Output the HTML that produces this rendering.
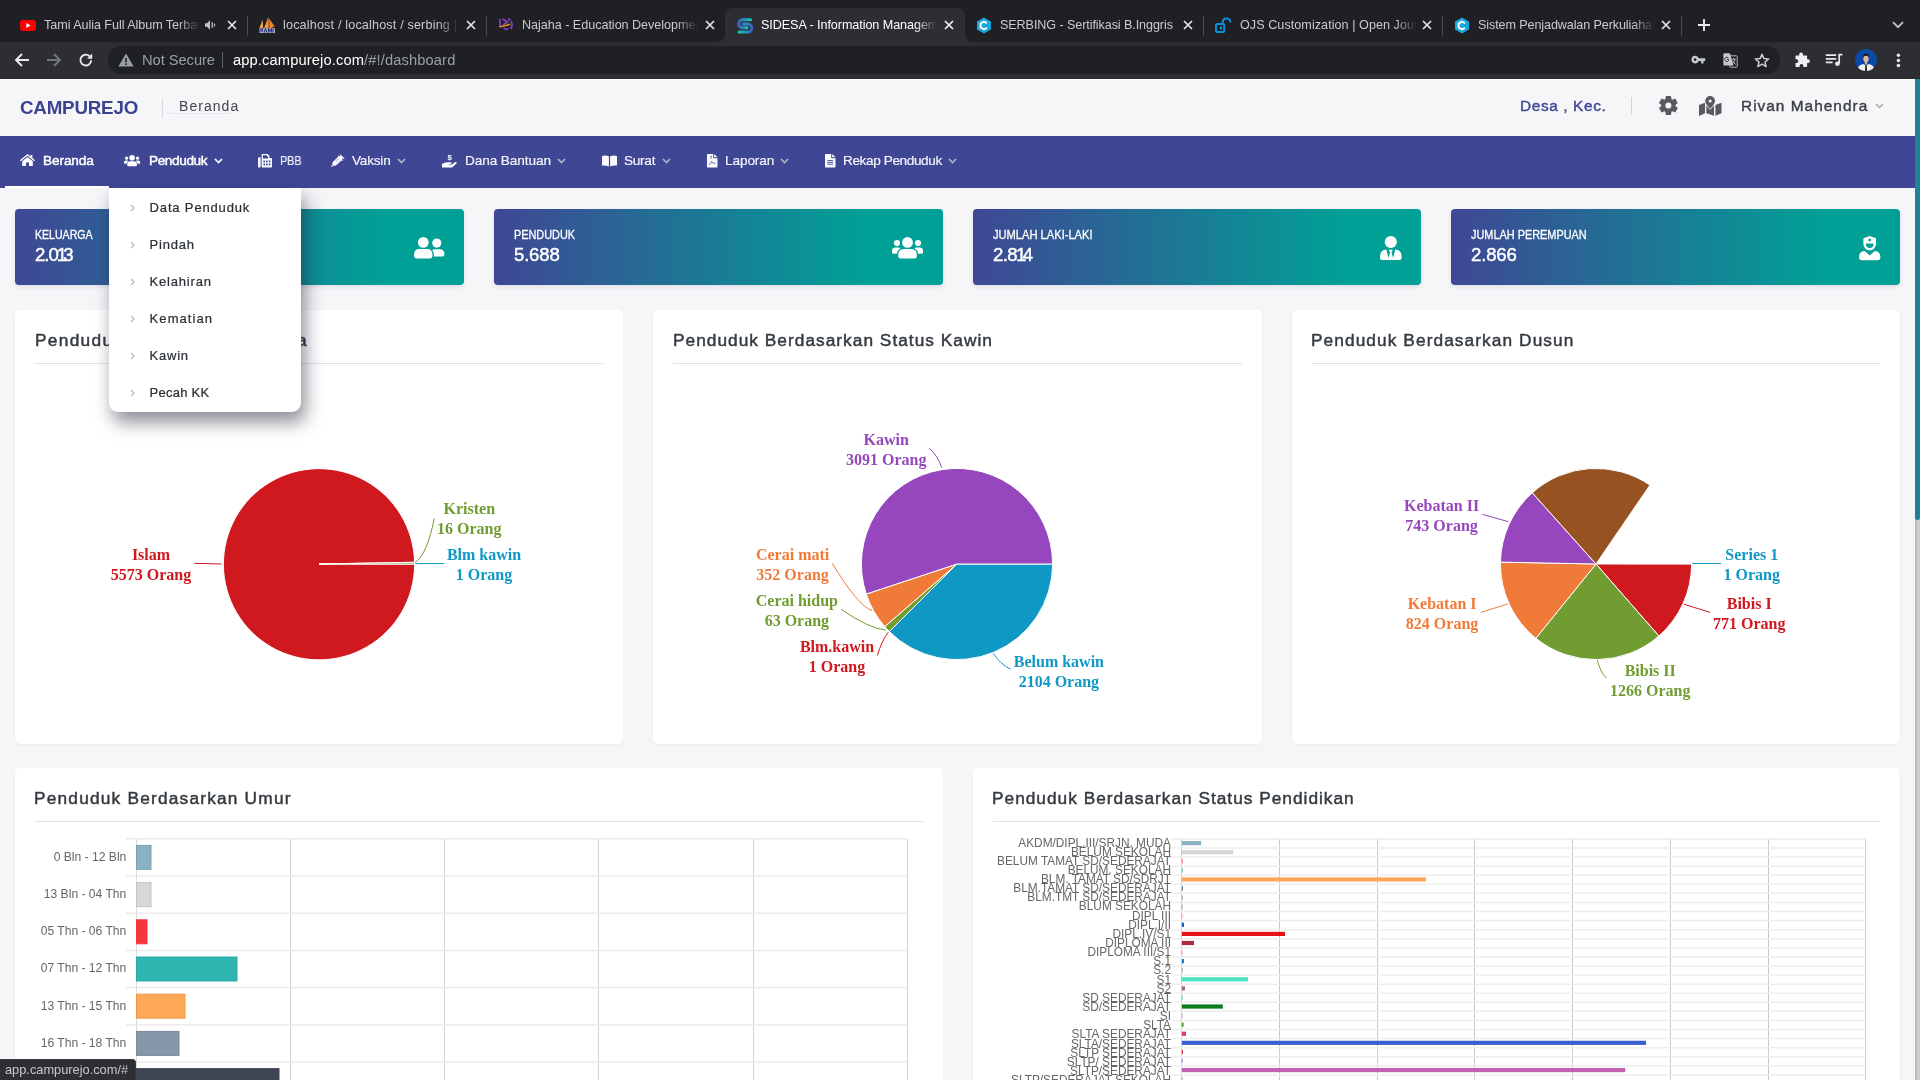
<!DOCTYPE html>
<html lang="id">
<head>
<meta charset="utf-8">
<title>SIDESA - Information Management</title>
<style>
*{box-sizing:border-box;margin:0;padding:0}
html,body{width:1920px;height:1080px;overflow:hidden;background:#f6f6f9;font-family:"Liberation Sans",sans-serif}
.abs{position:absolute}
#root{position:relative;width:1920px;height:1080px;overflow:hidden;background:#f6f6f9}
/* ---------- browser chrome ---------- */
#tabstrip{left:0;top:0;width:1920px;height:42px;background:#1f2023}
#toolbar{left:0;top:42px;width:1920px;height:37px;background:#2d2e32}
#toolbar-line{left:0;top:78px;width:1920px;height:1px;background:#2a2b2e}
#omni{left:108px;top:46px;width:1672px;height:28px;border-radius:14px;background:#1f2023}
.tab-title{top:16px;height:18px;line-height:18px;font-size:12.6px;color:#c9cbcf;white-space:nowrap;overflow:hidden;letter-spacing:0}
.tab-title.fade{-webkit-mask-image:linear-gradient(90deg,#000 0,#000 calc(100% - 22px),transparent 100%);mask-image:linear-gradient(90deg,#000 0,#000 calc(100% - 22px),transparent 100%)}
.tsep{top:16px;width:1px;height:20px;background:#4a4c50}
.tclose{top:19px;width:12px;height:12px}
#acttab{left:725px;top:8px;width:240px;height:34px;background:#2d2e32;border-radius:8px 8px 0 0}
.omni-txt{top:50px;height:20px;line-height:20px;font-size:14.7px;white-space:nowrap;letter-spacing:.12px}
/* ---------- app ---------- */
#apphead{left:0;top:79px;width:1915px;height:57px;background:#f6f6f9;border-top:1px solid #fff}
#nav{left:0;top:136px;width:1915px;height:52px;background:#3f4794}
.nv{top:150.3px;height:22px;line-height:22px;font-size:13.6px;color:rgba(255,255,255,.93);-webkit-text-stroke:.2px rgba(255,255,255,.9);white-space:nowrap}
.nv.on{color:#fff;-webkit-text-stroke:.45px #fff}
.stat{top:209px;height:76px;width:449px;border-radius:4px;background:linear-gradient(90deg,#3f4794 0%,#00a096 83%,#00a096 100%);box-shadow:0 2px 4px rgba(60,60,90,.12)}
.stat .lb{position:absolute;left:20px;top:18.8px;font-size:12.4px;line-height:14px;color:#fff;transform-origin:0 50%;-webkit-text-stroke:.3px #fff;white-space:nowrap}
.stat .vl i{font-style:normal;margin-left:-1.2px;margin-right:-2.8px}
.stat .vl{position:absolute;left:20px;top:35.2px;font-size:18.6px;line-height:22px;color:#fff;-webkit-text-stroke:.45px #fff;white-space:nowrap}
.card{background:#fff;border-radius:5px;box-shadow:0 1px 3px rgba(60,60,90,.06)}
.ctitle{font-size:17.3px;line-height:24px;height:24px;color:#343a40;-webkit-text-stroke:.45px #343a40;white-space:nowrap;letter-spacing:.93px}
.hr{height:1px;background:#dfe1e4}
.dd{left:109px;top:188px;width:192px;height:224px;background:#fff;border-radius:0 0 9px 9px;box-shadow:4px 10px 18px 0 rgba(25,25,45,.5)}
.ddi{left:40.6px;height:20px;line-height:20px;font-size:13px;color:#2a2f35;-webkit-text-stroke:.22px #2a2f35;white-space:nowrap}
svg{overflow:visible}
#root>*{will-change:transform}
</style>
</head>
<body>
<div id="root">

<!-- ================= BROWSER CHROME ================= -->
<div class="abs" id="tabstrip"></div>
<div class="abs" id="acttab"></div>
<div class="abs" id="toolbar"></div>
<div class="abs" id="toolbar-line"></div>
<div class="abs" id="omni"></div>
<!-- tab 1 -->
<svg class="abs" style="left:20px;top:19.5px" width="16" height="11" viewBox="0 0 16 11"><rect x="0" y="0" width="16" height="11" rx="3" fill="#ff0000"/><path d="M6.3 3 L10.5 5.5 L6.3 8 Z" fill="#fff"/></svg>
<div class="abs tab-title fade" style="left:44px;width:156px;letter-spacing:-0.05px">Tami Aulia Full Album Terbaru</div>
<svg class="abs" style="left:205px;top:19px" width="11" height="12" viewBox="0 0 11 12"><path d="M0 4.2 H2 L5 1.2 V10.8 L2 7.8 H0 Z" fill="#bfc2c6"/><rect x="6.6" y="3.2" width="1.3" height="5.6" fill="#bfc2c6"/><rect x="9" y="4.6" width="1.1" height="2.8" fill="#bfc2c6"/></svg>
<svg class="abs tclose" style="left:226px" viewBox="0 0 12 12"><path d="M2 2 L10 10 M10 2 L2 10" stroke="#e4e6e9" stroke-width="1.7" fill="none"/></svg>
<div class="abs tsep" style="left:247px"></div>
<!-- tab 2 -->
<svg class="abs" style="left:258px;top:16px" width="18" height="18" viewBox="0 0 18 18"><path d="M1.5 12 L4.6 3.5 L5.2 12 Z" fill="#f9a24a"/><path d="M6 12.2 L10.4 0.8 L10.8 12.2 Z" fill="#f7953a"/><path d="M11.4 12 L11.2 2.6 L17 11 L14 10.6 L15 12.4 Z" fill="#f78524"/><rect x="1" y="12.2" width="16" height="4.8" fill="#a9adc6"/><path d="M2 16.5 V13 H4.5 V15 H3 M6 16.5 L7.5 13 L9 16.5 M10.5 16.5 V13 L12 15 L13.5 13 V16.5 M15 16.5 V13" stroke="#2f3a7e" stroke-width="1.1" fill="none"/></svg>
<div class="abs tab-title fade" style="left:283px;width:176px;letter-spacing:0.17px">localhost / localhost / serbing | php</div>
<svg class="abs tclose" style="left:465px" viewBox="0 0 12 12"><path d="M2 2 L10 10 M10 2 L2 10" stroke="#e4e6e9" stroke-width="1.7" fill="none"/></svg>
<div class="abs tsep" style="left:486px"></div>
<!-- tab 3 -->
<svg class="abs" style="left:498px;top:18px" width="16" height="14" viewBox="0 0 16 14"><path d="M2 1.5 V8 M5 1.2 L9.4 3.8 L5.6 6.5 M10.5 1.5 Q12 1 12 2 M13.3 3.5 Q15 7 13 10.5 M6 10 Q8 12.5 10 10.5" stroke="#8a45c6" stroke-width="1.6" fill="none" stroke-linecap="round"/><path d="M1 8.2 Q7 7 11 6 L10.2 4.5 L12.6 6.4 L11 7.6 Q6 8.6 1.5 9.6 Z" fill="#f39a26"/></svg>
<div class="abs tab-title fade" style="left:522px;width:176px;letter-spacing:-0.03px">Najaha - Education Development</div>
<svg class="abs tclose" style="left:704px" viewBox="0 0 12 12"><path d="M2 2 L10 10 M10 2 L2 10" stroke="#e4e6e9" stroke-width="1.7" fill="none"/></svg>
<!-- tab 4 active -->
<svg class="abs" style="left:717px;top:34px" width="8" height="8" viewBox="0 0 8 8"><path d="M8 0 V8 H0 A8 8 0 0 0 8 0 Z" fill="#2d2e32"/></svg>
<svg class="abs" style="left:965px;top:34px" width="8" height="8" viewBox="0 0 8 8"><path d="M0 0 V8 H8 A8 8 0 0 1 0 0 Z" fill="#2d2e32"/></svg>
<svg class="abs" style="left:736px;top:16.5px" width="18" height="18" viewBox="0 0 18 18"><defs><linearGradient id="sg1" gradientUnits="userSpaceOnUse" x1="2" y1="0" x2="15" y2="0"><stop offset="0" stop-color="#3f5fc4"/><stop offset="1" stop-color="#12c8b2"/></linearGradient><linearGradient id="sg2" gradientUnits="userSpaceOnUse" x1="3" y1="0" x2="16" y2="0"><stop offset="0" stop-color="#10c8b2"/><stop offset="1" stop-color="#4060c4"/></linearGradient></defs><path d="M14.7 2.8 H6.6 A4 4 0 0 0 6.6 10.8 H10.9" stroke="url(#sg1)" stroke-width="3" fill="none" stroke-linecap="round"/><path d="M3.1 15.1 H11.7 A4.1 4.1 0 0 0 11.7 6.9 H6.5" stroke="url(#sg2)" stroke-width="3" fill="none" stroke-linecap="round"/><circle cx="6.5" cy="6.9" r="1.5" fill="#4a52cc"/><circle cx="10.9" cy="10.8" r="1.5" fill="#0fcbb4"/></svg>
<div class="abs tab-title fade" style="left:761.3px;width:176px;letter-spacing:-.07px;color:#fff">SIDESA - Information Management</div>
<svg class="abs tclose" style="left:943px" viewBox="0 0 12 12"><path d="M2 2 L10 10 M10 2 L2 10" stroke="#f4f5f6" stroke-width="1.7" fill="none"/></svg>
<!-- tab 5 -->
<svg class="abs" style="left:976px;top:16.5px" width="16" height="17" viewBox="0 0 16 17"><path d="M8 0.5 L15 4.5 V12.5 L8 16.5 L1 12.5 V4.5 Z" fill="#18a6e0"/><path d="M10.9 6.2 L8 4.6 L4.6 6.5 V10.5 L8 12.4 L10.9 10.8" stroke="#fff" stroke-width="1.9" fill="none"/></svg>
<div class="abs tab-title" style="left:1000px;width:176px;letter-spacing:-0.09px">SERBING - Sertifikasi B.Inggris</div>
<svg class="abs tclose" style="left:1182px" viewBox="0 0 12 12"><path d="M2 2 L10 10 M10 2 L2 10" stroke="#e4e6e9" stroke-width="1.7" fill="none"/></svg>
<div class="abs tsep" style="left:1203px"></div>
<!-- tab 6 -->
<svg class="abs" style="left:1214px;top:16px" width="18" height="18" viewBox="0 0 18 18"><rect x="2" y="8.1" width="8.2" height="7.8" rx="1" fill="none" stroke="#0a90d8" stroke-width="2"/><path d="M8.7 8 V5.8 A3.9 3.9 0 0 1 16.4 5.8 V6.6" stroke="#0a90d8" stroke-width="2" fill="none"/><rect x="6" y="10.5" width="1.6" height="3" fill="#22a8f0"/></svg>
<div class="abs tab-title fade" style="left:1239.5px;width:177px;letter-spacing:0.05px">OJS Customization | Open Journal</div>
<svg class="abs tclose" style="left:1421px" viewBox="0 0 12 12"><path d="M2 2 L10 10 M10 2 L2 10" stroke="#e4e6e9" stroke-width="1.7" fill="none"/></svg>
<div class="abs tsep" style="left:1442px"></div>
<!-- tab 7 -->
<svg class="abs" style="left:1454px;top:16.5px" width="16" height="17" viewBox="0 0 16 17"><path d="M8 0.5 L15 4.5 V12.5 L8 16.5 L1 12.5 V4.5 Z" fill="#18a6e0"/><path d="M10.9 6.2 L8 4.6 L4.6 6.5 V10.5 L8 12.4 L10.9 10.8" stroke="#fff" stroke-width="1.9" fill="none"/></svg>
<div class="abs tab-title fade" style="left:1478px;width:177px;letter-spacing:-0.11px">Sistem Penjadwalan Perkuliahan</div>
<svg class="abs tclose" style="left:1660px" viewBox="0 0 12 12"><path d="M2 2 L10 10 M10 2 L2 10" stroke="#e4e6e9" stroke-width="1.7" fill="none"/></svg>
<div class="abs tsep" style="left:1681px"></div>
<!-- new tab + / chevron -->
<svg class="abs" style="left:1697px;top:18px" width="14" height="14" viewBox="0 0 14 14"><path d="M7 1 V13 M1 7 H13" stroke="#e8eaed" stroke-width="1.9" fill="none"/></svg>
<svg class="abs" style="left:1892px;top:21px" width="12" height="8" viewBox="0 0 12 8"><path d="M1 1.2 L6 6.2 L11 1.2" stroke="#c4c7ca" stroke-width="1.7" fill="none"/></svg>

<svg class="abs" style="left:14px;top:52px" width="16" height="16" viewBox="0 0 16 16"><path d="M15 8 H2.2 M8 2 L2 8 L8 14" stroke="#e8eaed" stroke-width="1.9" fill="none"/></svg>
<svg class="abs" style="left:46px;top:52px" width="16" height="16" viewBox="0 0 16 16"><path d="M1 8 H13.8 M8 2 L14 8 L8 14" stroke="#73767b" stroke-width="1.9" fill="none"/></svg>
<svg class="abs" style="left:78px;top:52px" width="16" height="16" viewBox="0 0 16 16"><path d="M13.2 8.3 A5.4 5.4 0 1 1 11.6 4.2" stroke="#e8eaed" stroke-width="1.9" fill="none"/><path d="M14.2 1.6 V6.8 H9 Z" fill="#e8eaed"/></svg>
<svg class="abs" style="left:118px;top:53px" width="16" height="14" viewBox="0 0 16 14"><path d="M8 0.6 L15.6 13.4 H0.4 Z" fill="#9aa0a6"/><rect x="7.2" y="5" width="1.6" height="4.4" fill="#1f2023"/><rect x="7.2" y="10.4" width="1.6" height="1.6" fill="#1f2023"/></svg>
<div class="abs omni-txt" style="left:142px;color:#9aa0a6;letter-spacing:-.05px">Not Secure</div>
<div class="abs" style="left:222px;top:52px;width:1px;height:16px;background:#5f6368"></div>
<div class="abs omni-txt" style="left:233px;color:#fff"><span>app.campurejo.com</span><span style="color:#9aa0a6">/#!/dashboard</span></div>
<!-- key -->
<svg class="abs" style="left:1690.6px;top:54.6px" width="14.8" height="9.2" viewBox="0 0 16 10"><path d="M4.6 0.8 A4.2 4.2 0 1 0 8.5 6.6 H11 V9.2 H13.6 V6.6 H15.4 V3.6 H8.5 A4.2 4.2 0 0 0 4.6 0.8 Z M4.4 3.5 A1.5 1.5 0 1 1 4.4 6.5 A1.5 1.5 0 0 1 4.4 3.5 Z" fill="#c4c7ca" fill-rule="evenodd"/></svg>
<!-- translate -->
<svg class="abs" style="left:1722.6px;top:52.6px" width="15" height="15" viewBox="0 0 15 15"><rect x="6.8" y="2.8" width="7.4" height="11.4" rx=".8" fill="#202124" stroke="#b4b7bb" stroke-width="1"/><path d="M1.4 0.2 H6 Q7 0.2 7.3 1.2 L10.4 12.6 H1.4 Q0.4 12.6 0.4 11.6 V1.2 Q0.4 0.2 1.4 0.2 Z" fill="#c6c8cb"/><path d="M5.4 5 A2.1 2.1 0 1 0 5.6 7.4 V6.4 H4" stroke="#3a3b3f" stroke-width="1" fill="none"/><path d="M8.6 6.2 H12.8 M10.7 5.2 V6.2 M12 6.4 Q11.4 9.4 8.8 11.4 M9.6 7.8 Q10.6 10.2 12.8 11.4" stroke="#c6c8cb" stroke-width=".9" fill="none"/></svg>
<!-- star -->
<svg class="abs" style="left:1754px;top:52.5px" width="16" height="15" viewBox="0 0 16 15"><path d="M8 1.2 L9.9 5.6 L14.6 6 L11 9.1 L12.1 13.7 L8 11.2 L3.9 13.7 L5 9.1 L1.4 6 L6.1 5.6 Z" stroke="#c9ccd0" stroke-width="1.5" fill="none" stroke-linejoin="round"/></svg>
<!-- puzzle -->
<svg class="abs" style="left:1794px;top:52px" width="16" height="16" viewBox="0 0 16 16"><path d="M5.2 2.4 A1.9 1.9 0 0 1 9 2.4 V3.4 H12.2 A0.9 0.9 0 0 1 13.1 4.3 V7.2 H14 A1.9 1.9 0 0 1 14 11 H13.1 V14 A0.9 0.9 0 0 1 12.2 14.9 H9.4 V14 A1.9 1.9 0 0 0 5.6 14 V14.9 H2.4 A0.9 0.9 0 0 1 1.5 14 V11 H2.4 A1.9 1.9 0 0 0 2.4 7.2 H1.5 V4.3 A0.9 0.9 0 0 1 2.4 3.4 H5.2 Z" fill="#edeff1"/></svg>
<!-- playlist -->
<svg class="abs" style="left:1825px;top:53px" width="18" height="14" viewBox="0 0 18 14"><path d="M0.8 2.2 H11.2 M0.8 5.8 H11.2 M0.8 9.4 H7.6" stroke="#e8eaed" stroke-width="1.7" fill="none"/><path d="M14.2 10.6 V1.6 H17.4" stroke="#e8eaed" stroke-width="1.7" fill="none"/><circle cx="12.4" cy="10.8" r="2.3" fill="#e8eaed"/></svg>
<!-- avatar -->
<svg class="abs" style="left:1855px;top:49px" width="22" height="22" viewBox="0 0 22 22"><defs><clipPath id="avc"><circle cx="11" cy="11" r="11"/></clipPath></defs><g clip-path="url(#avc)"><rect width="22" height="22" fill="#0b4aa8"/><path d="M2 22 Q3 15.5 8.4 15 L11 17 L13.6 15 Q19 15.5 20 22 Z" fill="#f2efe6"/><path d="M10.3 16.6 H11.7 L12 22 H10 Z" fill="#15161a"/><ellipse cx="11" cy="9.6" rx="2.7" ry="3.6" fill="#e6b596"/><rect x="9.8" y="12.4" width="2.4" height="3.2" fill="#dca888"/><path d="M8.1 8.8 Q7.8 4.6 11 4.6 Q14.2 4.6 13.9 8.8 Q13.2 6.6 11 6.8 Q8.8 6.6 8.1 8.8 Z" fill="#15161a"/></g></svg>
<!-- dots -->
<svg class="abs" style="left:1896px;top:53px" width="5" height="15" viewBox="0 0 5 15"><circle cx="2.4" cy="2.2" r="1.75" fill="#e8eaed"/><circle cx="2.4" cy="7.5" r="1.75" fill="#e8eaed"/><circle cx="2.4" cy="12.6" r="1.75" fill="#e8eaed"/></svg>


<!-- ================= APP HEADER ================= -->
<div class="abs" id="apphead"></div>
<div class="abs" style="left:20px;top:96px;height:24px;line-height:24px;font-size:18.8px;font-weight:bold;color:#3b4292;letter-spacing:-.22px;white-space:nowrap">CAMPUREJO</div>
<div class="abs" style="left:162px;top:98px;width:1px;height:20px;background:#d9dadf"></div>
<div class="abs" style="left:164px;top:107px;width:72px;height:7px;border-bottom:1px solid #e7e9f0;border-radius:0 0 7px 7px"></div>
<div class="abs" style="left:179px;top:95px;height:22px;line-height:22px;font-size:14px;color:#41464c;letter-spacing:1.05px;white-space:nowrap">Beranda</div>
<div class="abs" style="left:1520px;top:95px;height:22px;line-height:22px;font-size:15.4px;color:#3f4794;letter-spacing:.62px;white-space:nowrap;-webkit-text-stroke:.4px #3f4794">Desa , Kec.</div>
<div class="abs" style="left:1631px;top:97px;width:1.4px;height:18px;background:#d3d4d9"></div>
<!-- gear -->
<svg class="abs" style="left:1659.2px;top:96px" width="18.8" height="19" viewBox="-10 -10 20 20"><g fill="#585962"><circle r="7.5"/><path id="gt" d="M-2.7 -10 H2.7 L3.4 -6 H-3.4 Z M-2.7 10 H2.7 L3.4 6 H-3.4 Z"/><use href="#gt" transform="rotate(60)"/><use href="#gt" transform="rotate(120)"/></g><circle r="3.2" fill="#f6f6f9"/></svg>
<!-- map marked -->
<svg class="abs" style="left:1698.75px;top:95.8px" width="22.5" height="20" viewBox="0 0 22.5 20"><g fill="#585962"><path d="M0 9 L6 6.7 V17.3 L0 20 Z"/><path d="M7.3 9.4 L15 9.4 V19.8 L7.3 17.3 Z"/><path d="M16.4 9 L22.5 6.7 V17.3 L16.4 19.8 Z"/><path d="M11.15 0 A4.9 4.9 0 0 1 16.05 4.9 Q16.05 7.4 11.15 12.9 Q6.25 7.4 6.25 4.9 A4.9 4.9 0 0 1 11.15 0 Z M11.15 3.4 A1.55 1.55 0 1 0 11.15 6.5 A1.55 1.55 0 0 0 11.15 3.4 Z" fill-rule="evenodd" stroke="#f6f6f9" stroke-width="1.3" paint-order="stroke"/></g></svg>
<div class="abs" style="left:1740.6px;top:95px;height:22px;line-height:22px;font-size:15.4px;color:#3a3f45;letter-spacing:1.02px;white-space:nowrap;-webkit-text-stroke:.4px #3a3f45">Rivan Mahendra</div>
<svg class="abs" style="left:1875px;top:103px" width="9" height="6" viewBox="0 0 9 6"><path d="M1 1 L4.5 4.5 L8 1" stroke="#a7a9ae" stroke-width="1.5" fill="none"/></svg>


<!-- ================= NAV ================= -->
<div class="abs" id="nav"></div>
<div class="abs" style="left:5px;top:186px;width:104px;height:2px;background:#fff"></div>
<!-- home -->
<svg class="abs" style="left:20px;top:154px" width="15" height="12" viewBox="0 0 15 12"><path d="M7.5 0 L10.6 2.6 V1 H12.4 V4.1 L15 6.3 L14.2 7.2 L7.5 1.7 L0.8 7.2 L0 6.3 Z" fill="#fff"/><path d="M7.5 2.9 L12.8 7.2 V11.4 A0.6 0.6 0 0 1 12.2 12 H9 V8.4 H6 V12 H2.8 A0.6 0.6 0 0 1 2.2 11.4 V7.2 Z" fill="#fff"/></svg>
<div class="abs nv on" style="left:42.5px;letter-spacing:-.09px">Beranda</div>
<!-- users -->
<svg class="abs" id="ic-users" style="left:124px;top:154.6px" width="16.2" height="11.3" viewBox="0 0 31 21.5"><g fill="#fff"><circle cx="15.5" cy="5.4" r="5.35"/><path d="M6.2 18.4 Q6.2 12.1 11.8 12.1 H19.2 Q24.8 12.1 24.8 18.4 V19.2 Q24.8 21.5 22.4 21.5 H8.6 Q6.2 21.5 6.2 19.2 Z"/><circle cx="5" cy="6.1" r="3.06"/><circle cx="26" cy="6.1" r="3.06"/><path d="M0 14 Q0 10.6 3.2 10.6 H6.4 Q7.6 10.6 8.4 11.2 Q5.4 13 5 16.7 H1.5 Q0 16.7 0 15.2 Z"/><path d="M31 14 Q31 10.6 27.8 10.6 H24.6 Q23.4 10.6 22.6 11.2 Q25.6 13 26 16.7 H29.5 Q31 16.7 31 15.2 Z"/></g></svg>
<div class="abs nv on" style="left:148.8px;letter-spacing:-.38px">Penduduk</div>
<svg class="abs" style="left:213.5px;top:158px" width="9" height="6.5" viewBox="0 0 9 6.5"><path d="M1 1 L4.5 4.6 L8 1" stroke="#fff" stroke-width="1.7" fill="none"/></svg>
<!-- fax / pbb -->
<svg class="abs" style="left:258px;top:153.5px" width="14" height="13.5" viewBox="0 0 14 13.5"><g fill="#fafaff"><rect x="0" y="3.2" width="2.6" height="10.3" rx=".9"/><path d="M3.6 0.6 A0.6 0.6 0 0 1 4.2 0 H9.6 L11.4 1.8 V4 H13.2 A0.8 0.8 0 0 1 14 4.8 V12.7 A0.8 0.8 0 0 1 13.2 13.5 H4.4 A0.8 0.8 0 0 1 3.6 12.7 Z M4.9 1.3 V4.6 H10.1 V2.4 H8.9 V1.3 Z M5.4 6.6 V8.2 H7 V6.6 Z M8.1 6.6 V8.2 H9.7 V6.6 Z M10.8 6.6 V8.2 H12.4 V6.6 Z M5.4 9.6 V11.2 H7 V9.6 Z M8.1 9.6 V11.2 H9.7 V9.6 Z M10.8 9.6 V11.2 H12.4 V9.6 Z" fill-rule="evenodd"/></g></svg>
<div class="abs nv" style="left:279.7px;font-size:13.2px;transform:scaleX(.82);transform-origin:0 50%">PBB</div>
<!-- syringe -->
<svg class="abs" style="left:330.5px;top:153.5px" width="14" height="13" viewBox="0 0 14 13"><g fill="#fafaff"><path d="M9.4 0.4 L13.6 4.6 L12.9 5.3 L11.8 4.2 L10.9 5.1 L12 6.2 L11.3 6.9 L10.7 6.3 L5.2 11.3 Q4.4 11.9 3.4 11.7 L2.4 11.5 L0.7 13 L0 12.3 L1.6 10.7 L1.4 9.6 Q1.2 8.6 2 7.8 L7.2 2.8 L6.6 2.2 L7.3 1.5 L8.4 2.6 L9.3 1.7 L8.7 1.1 Z"/></g><path d="M5 6.5 L6.2 7.7 M6.5 5.1 L7.7 6.3" stroke="#3f4794" stroke-width=".7"/></svg>
<div class="abs nv" style="left:352px;letter-spacing:-.22px">Vaksin</div>
<svg class="abs" style="left:396.5px;top:158px" width="9" height="6.5" viewBox="0 0 9 6.5"><path d="M1 1 L4.5 4.6 L8 1" stroke="#b4b4b8" stroke-width="1.7" fill="none"/></svg>
<!-- hand holding usd -->
<svg class="abs" style="left:441.5px;top:153.5px" width="15" height="13.5" viewBox="0 0 15 13.5"><g fill="#fafaff"><path d="M0 9.6 H1.6 Q3.2 8.2 4.8 8.2 H8.6 Q9.6 8.2 9.6 9.1 Q9.6 10 8.6 10 H6.8 V10.5 H9.8 L12.9 8.2 Q13.8 7.6 14.5 8.3 Q15.1 9.1 14.3 9.8 L10.6 12.9 Q9.9 13.5 9 13.5 H0 Z"/></g><text x="7.7" y="6.4" font-family="Liberation Sans,sans-serif" font-size="8" font-weight="bold" fill="#fafaff" text-anchor="middle">$</text></svg>
<div class="abs nv" style="left:464.5px;letter-spacing:-.08px">Dana Bantuan</div>
<svg class="abs" style="left:556.5px;top:158px" width="9" height="6.5" viewBox="0 0 9 6.5"><path d="M1 1 L4.5 4.6 L8 1" stroke="#b4b4b8" stroke-width="1.7" fill="none"/></svg>
<!-- book open -->
<svg class="abs" style="left:601.5px;top:154.5px" width="15" height="11.5" viewBox="0 0 15 11.5"><g fill="#fafaff"><path d="M0 1 Q3.6 0 6.9 1.2 V11.5 Q3.6 10.2 0.6 10.6 Q0 10.6 0 10 Z"/><path d="M15 1 Q11.4 0 8.1 1.2 V11.5 Q11.4 10.2 14.4 10.6 Q15 10.6 15 10 Z"/></g></svg>
<div class="abs nv" style="left:624.4px;letter-spacing:-.26px">Surat</div>
<svg class="abs" style="left:662px;top:158px" width="9" height="6.5" viewBox="0 0 9 6.5"><path d="M1 1 L4.5 4.6 L8 1" stroke="#b4b4b8" stroke-width="1.7" fill="none"/></svg>
<!-- file pdf -->
<svg class="abs" style="left:706.5px;top:153.5px" width="10.5" height="13.5" viewBox="0 0 10.5 13.5"><path d="M0.7 0 H6.2 V3.6 A0.7 0.7 0 0 0 6.9 4.3 H10.5 V12.8 A0.7 0.7 0 0 1 9.8 13.5 H0.7 A0.7 0.7 0 0 1 0 12.8 V0.7 A0.7 0.7 0 0 1 0.7 0 Z M7.2 0 L10.5 3.3 H7.2 Z" fill="#fafaff"/><path d="M2 10.8 Q4 9.6 4.6 7.4 Q5.2 9.2 8.4 9.6 M3.4 2.4 H5 M3.4 4 H5" stroke="#3f4794" stroke-width=".8" fill="none"/></svg>
<div class="abs nv" style="left:724.8px;letter-spacing:-.1px">Laporan</div>
<svg class="abs" style="left:780px;top:158px" width="9" height="6.5" viewBox="0 0 9 6.5"><path d="M1 1 L4.5 4.6 L8 1" stroke="#b4b4b8" stroke-width="1.7" fill="none"/></svg>
<!-- file alt -->
<svg class="abs" style="left:824.5px;top:153.5px" width="10.5" height="13.5" viewBox="0 0 10.5 13.5"><path d="M0.7 0 H6.2 V3.6 A0.7 0.7 0 0 0 6.9 4.3 H10.5 V12.8 A0.7 0.7 0 0 1 9.8 13.5 H0.7 A0.7 0.7 0 0 1 0 12.8 V0.7 A0.7 0.7 0 0 1 0.7 0 Z M7.2 0 L10.5 3.3 H7.2 Z" fill="#fafaff"/><path d="M2.4 6.6 H8.1 M2.4 8.4 H8.1 M2.4 10.2 H8.1" stroke="#3f4794" stroke-width=".9" fill="none"/></svg>
<div class="abs nv" style="left:842.7px;letter-spacing:-.39px">Rekap Penduduk</div>
<svg class="abs" style="left:947.5px;top:158px" width="9" height="6.5" viewBox="0 0 9 6.5"><path d="M1 1 L4.5 4.6 L8 1" stroke="#b4b4b8" stroke-width="1.7" fill="none"/></svg>


<!-- ================= STAT CARDS ================= -->
<div class="abs stat" style="left:15px"><div class="lb" style="transform:scaleX(.853)">KELUARGA</div><div class="vl" style="letter-spacing:-.98px">2.0<i>1</i>3</div>
<svg class="abs" style="left:398.5px;top:28.3px" width="30.4" height="21.4" viewBox="0 0 30.4 21.4"><g fill="#fff"><circle cx="9.3" cy="5.4" r="5.35"/><path d="M0 18 Q0 12.1 5.6 12.1 H13 Q18.5 12.1 18.5 18 V19 Q18.5 21.4 16 21.4 H2.5 Q0 21.4 0 19 Z"/><circle cx="22.8" cy="6.1" r="4.6"/><path d="M18.2 13 Q19.6 12.2 21 12.2 H25.4 Q30.4 12.2 30.4 16.8 V17.4 Q30.4 19.6 28.2 19.6 H19.9 V17.6 Q19.9 14.9 18.2 13 Z"/></g></svg></div>
<div class="abs stat" style="left:494px"><div class="lb" style="transform:scaleX(.878)">PENDUDUK</div><div class="vl" style="letter-spacing:-.2px">5.688</div>
<svg class="abs" style="left:398px;top:28.3px" width="31" height="21.5" viewBox="0 0 31 21.5"><g fill="#fff"><circle cx="15.5" cy="5.4" r="5.35"/><path d="M6.2 18.4 Q6.2 12.1 11.8 12.1 H19.2 Q24.8 12.1 24.8 18.4 V19.2 Q24.8 21.5 22.4 21.5 H8.6 Q6.2 21.5 6.2 19.2 Z"/><circle cx="5" cy="6.1" r="3.06"/><circle cx="26" cy="6.1" r="3.06"/><path d="M0 14 Q0 10.6 3.2 10.6 H6.4 Q7.6 10.6 8.4 11.2 Q5.4 13 5 16.7 H1.5 Q0 16.7 0 15.2 Z"/><path d="M31 14 Q31 10.6 27.8 10.6 H24.6 Q23.4 10.6 22.6 11.2 Q25.6 13 26 16.7 H29.5 Q31 16.7 31 15.2 Z"/></g></svg></div>
<div class="abs stat" style="left:973px;width:448px"><div class="lb" style="transform:scaleX(.898)">JUMLAH LAKI-LAKI</div><div class="vl" style="letter-spacing:-.6px">2.8<i>1</i>4</div>
<svg class="abs" style="left:407px;top:27px" width="21.6" height="24" viewBox="0 0 21.6 24"><g fill="#fff"><circle cx="10.8" cy="6" r="6.1"/><path d="M2 24 Q0 24 0 22 V20 Q0.4 13.9 6.4 13.5 L8.4 22 L10.1 16.6 L8.7 13.7 H12.9 L11.5 16.6 L13.2 22 L15.2 13.5 Q21.2 13.9 21.6 20 V22 Q21.6 24 19.6 24 Z"/></g></svg></div>
<div class="abs stat" style="left:1451px"><div class="lb" style="transform:scaleX(.88)">JUMLAH PEREMPUAN</div><div class="vl" style="letter-spacing:-.16px">2.866</div>
<svg class="abs" style="left:407.8px;top:26.8px" width="21.4" height="24.2" viewBox="0 0 21.4 24.2"><g fill="#fff"><path d="M4.4 2.2 L10.7 0 L17 2.2 V8 A6.3 6.3 0 0 1 4.4 8 Z M6.9 7.4 V8.2 A3.8 3.8 0 0 0 14.5 8.2 V7.4 Z M10.7 1.9 L11.4 3.3 L12.8 4 L11.4 4.7 L10.7 6.1 L10 4.7 L8.6 4 L10 3.3 Z" fill-rule="evenodd"/><path d="M0 21 Q0 15.4 5.7 15 L10.7 19.4 L15.7 15 Q21.4 15.4 21.4 21 Q21.4 24.2 18.4 24.2 H3 Q0 24.2 0 21 Z"/></g></svg></div>


<!-- ================= PIE CARDS ================= -->
<!--PIES-START-->
<div class="abs card" style="left:15px;top:310px;width:608px;height:434px"></div>
<div class="abs ctitle" style="left:34.5px;top:328px;letter-spacing:1.3px">Penduduk Berdasarkan Agama</div>
<div class="abs hr" style="left:35px;top:363px;width:568px"></div>
<div class="abs card" style="left:653px;top:310px;width:609px;height:434px"></div>
<div class="abs ctitle" style="left:672.5px;top:328px;letter-spacing:1.02px">Penduduk Berdasarkan Status Kawin</div>
<div class="abs hr" style="left:673px;top:363px;width:569px"></div>
<div class="abs card" style="left:1292px;top:310px;width:608px;height:434px"></div>
<div class="abs ctitle" style="left:1311.2px;top:328px;letter-spacing:1.08px">Penduduk Berdasarkan Dusun</div>
<div class="abs hr" style="left:1312px;top:363px;width:568px"></div>
<svg class="abs" style="left:0;top:0" width="1915" height="1080" viewBox="0 0 1915 1080" font-family="Liberation Serif,serif" font-weight="bold" font-size="16">
<path d="M319.00 564.00 L414.60 564.00 A95.6 95.6 0 0 1 414.60 564.11 Z" fill="#0f98c4" stroke="#fff" stroke-width="1" stroke-linejoin="round"/>
<path d="M319.00 564.00 L414.60 564.11 A95.6 95.6 0 1 1 414.58 562.28 Z" fill="#d0181f" stroke="#fff" stroke-width="1" stroke-linejoin="round"/>
<path d="M319.00 564.00 L414.58 562.28 A95.6 95.6 0 0 1 414.60 564.00 Z" fill="#719c31" stroke="#fff" stroke-width="1" stroke-linejoin="round"/>
<text x="151" y="560" fill="#d0181f" text-anchor="middle">Islam</text><text x="151" y="580" fill="#d0181f" text-anchor="middle">5573 Orang</text>
<text x="469.3" y="514" fill="#719c31" text-anchor="middle">Kristen</text><text x="469.3" y="534" fill="#719c31" text-anchor="middle">16 Orang</text>
<text x="484" y="560" fill="#0f98c4" text-anchor="middle">Blm kawin</text><text x="484" y="580" fill="#0f98c4" text-anchor="middle">1 Orang</text>
<path d="M194.3 563.3 L221.7 564" stroke="#d0181f" fill="none" stroke-width="1"/><path d="M434.3 518.3 Q427 555 415 562.6" stroke="#719c31" fill="none" stroke-width="1"/><path d="M415.7 563.6 L444.3 563.6" stroke="#0f98c4" fill="none" stroke-width="1"/>
<path d="M957.00 564.00 L1052.60 564.00 A95.6 95.6 0 0 1 889.41 631.61 Z" fill="#0f98c4" stroke="#fff" stroke-width="1" stroke-linejoin="round"/>
<path d="M957.00 564.00 L889.41 631.61 A95.6 95.6 0 0 1 889.33 631.53 Z" fill="#d0181f" stroke="#fff" stroke-width="1" stroke-linejoin="round"/>
<path d="M957.00 564.00 L889.33 631.53 A95.6 95.6 0 0 1 884.74 626.60 Z" fill="#719c31" stroke="#fff" stroke-width="1" stroke-linejoin="round"/>
<path d="M957.00 564.00 L884.74 626.60 A95.6 95.6 0 0 1 866.24 594.05 Z" fill="#f07a38" stroke="#fff" stroke-width="1" stroke-linejoin="round"/>
<path d="M957.00 564.00 L866.24 594.05 A95.6 95.6 0 1 1 1052.60 564.00 Z" fill="#9647bd" stroke="#fff" stroke-width="1" stroke-linejoin="round"/>
<text x="886.2" y="445" fill="#9647bd" text-anchor="middle">Kawin</text><text x="886.2" y="465" fill="#9647bd" text-anchor="middle">3091 Orang</text>
<text x="792.6" y="560" fill="#f07a38" text-anchor="middle">Cerai mati</text><text x="792.6" y="580" fill="#f07a38" text-anchor="middle">352 Orang</text>
<text x="796.9" y="606" fill="#719c31" text-anchor="middle">Cerai hidup</text><text x="796.9" y="626" fill="#719c31" text-anchor="middle">63 Orang</text>
<text x="837" y="652" fill="#d0181f" text-anchor="middle">Blm.kawin</text><text x="837" y="672" fill="#d0181f" text-anchor="middle">1 Orang</text>
<text x="1058.9" y="667.3" fill="#0f98c4" text-anchor="middle">Belum kawin</text><text x="1058.9" y="687.3" fill="#0f98c4" text-anchor="middle">2104 Orang</text>
<path d="M929.3 448.3 Q938 456 941.7 467.7" stroke="#9647bd" fill="none" stroke-width="1"/><path d="M832.3 563.3 Q858 606 872.3 610.7" stroke="#f07a38" fill="none" stroke-width="1"/><path d="M841 609.3 Q870 629 885.7 630" stroke="#719c31" fill="none" stroke-width="1"/><path d="M877.3 655.7 Q882 640 888.3 632.3" stroke="#d0181f" fill="none" stroke-width="1"/><path d="M993.3 653.3 Q1000 664 1010.7 669.3" stroke="#0f98c4" fill="none" stroke-width="1"/>
<path d="M1596.00 564.00 L1691.60 564.00 A95.6 95.6 0 0 1 1691.60 564.11 Z" fill="#0f98c4" stroke="#fff" stroke-width="1" stroke-linejoin="round"/>
<path d="M1596.00 564.00 L1691.60 564.11 A95.6 95.6 0 0 1 1658.89 636.00 Z" fill="#d0181f" stroke="#fff" stroke-width="1" stroke-linejoin="round"/>
<path d="M1596.00 564.00 L1658.89 636.00 A95.6 95.6 0 0 1 1535.85 638.31 Z" fill="#719c31" stroke="#fff" stroke-width="1" stroke-linejoin="round"/>
<path d="M1596.00 564.00 L1535.85 638.31 A95.6 95.6 0 0 1 1500.42 562.10 Z" fill="#f07a38" stroke="#fff" stroke-width="1" stroke-linejoin="round"/>
<path d="M1596.00 564.00 L1500.42 562.10 A95.6 95.6 0 0 1 1532.24 492.77 Z" fill="#9647bd" stroke="#fff" stroke-width="1" stroke-linejoin="round"/>
<path d="M1596.00 564.00 L1532.24 492.77 A95.6 95.6 0 0 1 1649.97 485.09 Z" fill="#965220" stroke="#fff" stroke-width="1" stroke-linejoin="round"/>
<text x="1441.6" y="511" fill="#9647bd" text-anchor="middle">Kebatan II</text><text x="1441.6" y="531" fill="#9647bd" text-anchor="middle">743 Orang</text>
<text x="1751.8" y="560" fill="#0f98c4" text-anchor="middle">Series 1</text><text x="1751.8" y="580" fill="#0f98c4" text-anchor="middle">1 Orang</text>
<text x="1749.2" y="609" fill="#d0181f" text-anchor="middle">Bibis I</text><text x="1749.2" y="629" fill="#d0181f" text-anchor="middle">771 Orang</text>
<text x="1442.1" y="609" fill="#f07a38" text-anchor="middle">Kebatan I</text><text x="1442.1" y="629" fill="#f07a38" text-anchor="middle">824 Orang</text>
<text x="1650.2" y="675.8" fill="#719c31" text-anchor="middle">Bibis II</text><text x="1650.2" y="695.8" fill="#719c31" text-anchor="middle">1266 Orang</text>
<path d="M1482.3 514.3 L1508.3 521.7" stroke="#9647bd" fill="none" stroke-width="1"/><path d="M1692.3 563.5 L1721 563.5" stroke="#0f98c4" fill="none" stroke-width="1"/><path d="M1684 604.3 L1710 612.3" stroke="#d0181f" fill="none" stroke-width="1"/><path d="M1481 612.3 L1507.7 604" stroke="#f07a38" fill="none" stroke-width="1"/><path d="M1597.3 660 Q1600 672 1606.7 678.3" stroke="#719c31" fill="none" stroke-width="1"/>
</svg>
<!--PIES-END-->

<!-- ================= BAR CARDS ================= -->
<!--BARS-START-->
<div class="abs card" style="left:15px;top:768px;width:928px;height:330px"></div>
<div class="abs ctitle" style="left:34.3px;top:786px;letter-spacing:1.2px">Penduduk Berdasarkan Umur</div>
<div class="abs hr" style="left:35px;top:821px;width:888px"></div>
<div class="abs card" style="left:973px;top:768px;width:927px;height:330px"></div>
<div class="abs ctitle" style="left:992.2px;top:786px;letter-spacing:1.0px">Penduduk Berdasarkan Status Pendidikan</div>
<div class="abs hr" style="left:993px;top:821px;width:887px"></div>
<svg class="abs" style="left:0;top:0" width="1915" height="1080" viewBox="0 0 1915 1080" font-family="Liberation Sans,sans-serif" font-size="12" fill="#666">
<path d="M136.5 838.8 V1080 M290.5 838.8 V1080 M444.5 838.8 V1080 M598.5 838.8 V1080 M753.5 838.8 V1080 M907.5 838.8 V1080 " stroke="#d4d4d4" stroke-width="1" fill="none"/>
<path d="M126.0 838.8 H907.3 M126.0 876.0 H907.3 M126.0 913.2 H907.3 M126.0 950.4 H907.3 M126.0 987.6 H907.3 M126.0 1024.8 H907.3 M126.0 1062.0 H907.3 M126.0 1099.2 H907.3 " stroke="#ececec" stroke-width="1.5" fill="none"/>
<path d="M136.5 838.8 V1080" stroke="#dcdcdc" stroke-width="1" fill="none"/>
<rect x="136.5" y="845.4" width="14.5" height="24" fill="#8ab1c4" stroke="#7ea3b6" stroke-width="1"/>
<text x="126.3" y="860.8" text-anchor="end" font-size="12.1">0 Bln - 12 Bln</text>
<rect x="136.5" y="882.6" width="14.5" height="24" fill="#d8d8d8" stroke="#c4c4c4" stroke-width="1"/>
<text x="126.3" y="898.0" text-anchor="end" font-size="12.1">13 Bln - 04 Thn</text>
<rect x="136.5" y="919.8" width="10.5" height="24" fill="#f5363f" stroke="#f5363f" stroke-width="1"/>
<text x="126.3" y="935.2" text-anchor="end" font-size="12.1">05 Thn - 06 Thn</text>
<rect x="136.5" y="957.0" width="100.5" height="24" fill="#2fb6b3" stroke="#2aa9a6" stroke-width="1"/>
<text x="126.3" y="972.4" text-anchor="end" font-size="12.1">07 Thn - 12 Thn</text>
<rect x="136.5" y="994.2" width="48.5" height="24" fill="#fda856" stroke="#ee9a48" stroke-width="1"/>
<text x="126.3" y="1009.6" text-anchor="end" font-size="12.1">13 Thn - 15 Thn</text>
<rect x="136.5" y="1031.4" width="42.5" height="24" fill="#8896a9" stroke="#7b899c" stroke-width="1"/>
<text x="126.3" y="1046.8" text-anchor="end" font-size="12.1">16 Thn - 18 Thn</text>
<rect x="136.5" y="1068.6" width="142.5" height="24" fill="#3f4553" stroke="#3f4553" stroke-width="1"/>
<path d="M1181.5 838.9 V1080 M1279.5 838.9 V1080 M1377.5 838.9 V1080 M1474.5 838.9 V1080 M1572.5 838.9 V1080 M1670.5 838.9 V1080 M1768.5 838.9 V1080 M1865.5 838.9 V1080 " stroke="#cbcbcb" stroke-width="1" fill="none"/>
<path d="M1171.5 838.90 H1865.8 M1171.5 847.98 H1865.8 M1171.5 857.05 H1865.8 M1171.5 866.13 H1865.8 M1171.5 875.21 H1865.8 M1171.5 884.28 H1865.8 M1171.5 893.36 H1865.8 M1171.5 902.44 H1865.8 M1171.5 911.52 H1865.8 M1171.5 920.59 H1865.8 M1171.5 929.67 H1865.8 M1171.5 938.75 H1865.8 M1171.5 947.82 H1865.8 M1171.5 956.90 H1865.8 M1171.5 965.98 H1865.8 M1171.5 975.05 H1865.8 M1171.5 984.13 H1865.8 M1171.5 993.21 H1865.8 M1171.5 1002.29 H1865.8 M1171.5 1011.36 H1865.8 M1171.5 1020.44 H1865.8 M1171.5 1029.52 H1865.8 M1171.5 1038.59 H1865.8 M1171.5 1047.67 H1865.8 M1171.5 1056.75 H1865.8 M1171.5 1065.83 H1865.8 M1171.5 1074.90 H1865.8 " stroke="#eeeeee" stroke-width="1.5" fill="none"/>
<rect x="1182.0" y="841.04" width="19.2" height="4.2" fill="#8ab1c4"/>
<text x="1171" y="846.50" text-anchor="end" font-size="11.85">AKDM/DIPL.III/SRJN. MUDA</text>
<rect x="1182.0" y="850.12" width="51.3" height="4.2" fill="#d6d6d6"/>
<text x="1171" y="855.64" text-anchor="end" font-size="11.85">BELUM SEKOLAH</text>
<rect x="1182.0" y="859.19" width="0.6" height="4.2" fill="#f5363f"/>
<text x="1171" y="864.77" text-anchor="end" font-size="11.85">BELUM TAMAT SD/SEDERAJAT</text>
<rect x="1182.0" y="868.27" width="0.6" height="4.2" fill="#2fb6b3"/>
<text x="1171" y="873.91" text-anchor="end" font-size="11.85">BELUM. SEKOLAH</text>
<rect x="1182.0" y="877.35" width="244.0" height="4.2" fill="#fda856"/>
<text x="1171" y="883.05" text-anchor="end" font-size="11.85">BLM. TAMAT SD/SDRJT</text>
<rect x="1182.0" y="886.42" width="1.0" height="4.2" fill="#5b6f95"/>
<text x="1171" y="892.18" text-anchor="end" font-size="11.85">BLM.TAMAT SD/SEDERAJAT</text>
<rect x="1182.0" y="895.50" width="0.6" height="4.2" fill="#888"/>
<text x="1171" y="901.32" text-anchor="end" font-size="11.85">BLM.TMT SD/SEDERAJAT</text>
<rect x="1182.0" y="904.58" width="0.6" height="4.2" fill="#999"/>
<text x="1171" y="910.46" text-anchor="end" font-size="11.85">BLUM SEKOLAH</text>
<rect x="1182.0" y="913.65" width="0.6" height="4.2" fill="#f0a0c0"/>
<text x="1171" y="919.60" text-anchor="end" font-size="11.85">DIPL III</text>
<rect x="1182.0" y="922.73" width="2.0" height="4.2" fill="#0d5fc4"/>
<text x="1171" y="928.73" text-anchor="end" font-size="11.85">DIPL.I/II</text>
<rect x="1182.0" y="931.81" width="103.0" height="4.2" fill="#e8111a"/>
<text x="1171" y="937.87" text-anchor="end" font-size="11.85">DIPL.IV/S1</text>
<rect x="1182.0" y="940.89" width="12.0" height="4.2" fill="#b02a3e"/>
<text x="1171" y="947.01" text-anchor="end" font-size="11.85">DIPLOMA III</text>
<rect x="1182.0" y="949.96" width="0.6" height="4.2" fill="#f0a0c0"/>
<text x="1171" y="956.14" text-anchor="end" font-size="11.85">DIPLOMA III/S1</text>
<rect x="1182.0" y="959.04" width="2.0" height="4.2" fill="#0f7fd6"/>
<text x="1171" y="965.28" text-anchor="end" font-size="11.85">S.1</text>
<rect x="1182.0" y="968.12" width="0.6" height="4.2" fill="#88a"/>
<text x="1171" y="974.42" text-anchor="end" font-size="11.85">S.2</text>
<rect x="1182.0" y="977.19" width="66.0" height="4.2" fill="#4de6c0"/>
<text x="1171" y="983.56" text-anchor="end" font-size="11.85">S1</text>
<rect x="1182.0" y="986.27" width="3.0" height="4.2" fill="#a07070"/>
<text x="1171" y="992.69" text-anchor="end" font-size="11.85">S2</text>
<rect x="1182.0" y="995.35" width="0.6" height="4.2" fill="#40d0c0"/>
<text x="1171" y="1001.83" text-anchor="end" font-size="11.85">SD SEDERAJAT</text>
<rect x="1182.0" y="1004.42" width="40.8" height="4.2" fill="#0a7d1e"/>
<text x="1171" y="1010.97" text-anchor="end" font-size="11.85">SD/SEDERAJAT</text>
<rect x="1182.0" y="1013.50" width="0.6" height="4.2" fill="#aaa"/>
<text x="1171" y="1020.10" text-anchor="end" font-size="11.85">SI</text>
<rect x="1182.0" y="1022.58" width="1.7" height="4.2" fill="#4caf20"/>
<text x="1171" y="1029.24" text-anchor="end" font-size="11.85">SLTA</text>
<rect x="1182.0" y="1031.66" width="4.0" height="4.2" fill="#d94060"/>
<text x="1171" y="1038.38" text-anchor="end" font-size="11.85">SLTA SEDERAJAT</text>
<rect x="1182.0" y="1040.73" width="464.0" height="4.2" fill="#3a5fd0"/>
<text x="1171" y="1047.51" text-anchor="end" font-size="11.85">SLTA/SEDERAJAT</text>
<rect x="1182.0" y="1049.81" width="1.0" height="4.2" fill="#d03040"/>
<text x="1171" y="1056.65" text-anchor="end" font-size="11.85">SLTP SEDERAJAT</text>
<rect x="1182.0" y="1058.89" width="0.6" height="4.2" fill="#8060c0"/>
<text x="1171" y="1065.79" text-anchor="end" font-size="11.85">SLTP/ SEDERAJAT</text>
<rect x="1182.0" y="1067.96" width="443.2" height="4.2" fill="#c460b0"/>
<text x="1171" y="1074.92" text-anchor="end" font-size="11.85">SLTP/SEDERAJAT</text>
<rect x="1182.0" y="1077.04" width="0.6" height="4.2" fill="#999"/>
<text x="1171" y="1084.06" text-anchor="end" font-size="11.85">SLTP/SEDERAJAT SEKOLAH</text>
</svg>
<!--BARS-END-->

<!-- ================= DROPDOWN ================= -->
<div class="abs dd">
<svg class="abs" style="left:20.5px;top:16px" width="5" height="8" viewBox="0 0 5 8"><path d="M1 1 L4 4 L1 7" stroke="#a9c1ca" stroke-width="1.3" fill="none"/></svg><div class="abs ddi" style="top:9.5px;letter-spacing:0.84px">Data Penduduk</div>
<svg class="abs" style="left:20.5px;top:53px" width="5" height="8" viewBox="0 0 5 8"><path d="M1 1 L4 4 L1 7" stroke="#a9c1ca" stroke-width="1.3" fill="none"/></svg><div class="abs ddi" style="top:46.5px;letter-spacing:0.8px">Pindah</div>
<svg class="abs" style="left:20.5px;top:90px" width="5" height="8" viewBox="0 0 5 8"><path d="M1 1 L4 4 L1 7" stroke="#a9c1ca" stroke-width="1.3" fill="none"/></svg><div class="abs ddi" style="top:83.5px;letter-spacing:0.8px">Kelahiran</div>
<svg class="abs" style="left:20.5px;top:127px" width="5" height="8" viewBox="0 0 5 8"><path d="M1 1 L4 4 L1 7" stroke="#a9c1ca" stroke-width="1.3" fill="none"/></svg><div class="abs ddi" style="top:120.5px;letter-spacing:1.08px">Kematian</div>
<svg class="abs" style="left:20.5px;top:164px" width="5" height="8" viewBox="0 0 5 8"><path d="M1 1 L4 4 L1 7" stroke="#a9c1ca" stroke-width="1.3" fill="none"/></svg><div class="abs ddi" style="top:157.5px;letter-spacing:0.75px">Kawin</div>
<svg class="abs" style="left:20.5px;top:201px" width="5" height="8" viewBox="0 0 5 8"><path d="M1 1 L4 4 L1 7" stroke="#a9c1ca" stroke-width="1.3" fill="none"/></svg><div class="abs ddi" style="top:194.5px;letter-spacing:0.25px">Pecah KK</div>
</div>


<!-- ================= SCROLLBAR + STATUS ================= -->
<div class="abs" style="left:1915px;top:79px;width:5px;height:1001px;background:linear-gradient(90deg,#b4b4b5,#cfcfd1 55%,#cbcbcd)"></div>
<div class="abs" style="left:1915px;top:79px;width:5px;height:441px;background:#1c8496;border-radius:0 0 2.5px 2.5px"></div>
<div class="abs" style="left:0;top:1059px;width:135.5px;height:21px;background:#2e2f32;border-top:1px solid #3a3b3f;border-right:1px solid #3a3b3f;border-radius:0 4px 0 0"></div>
<div class="abs" style="left:5px;top:1061px;height:18px;line-height:18px;font-size:12.8px;color:#c6c9cd;white-space:nowrap;letter-spacing:.0px">app.campurejo.com/#</div>


</div>
</body>
</html>
